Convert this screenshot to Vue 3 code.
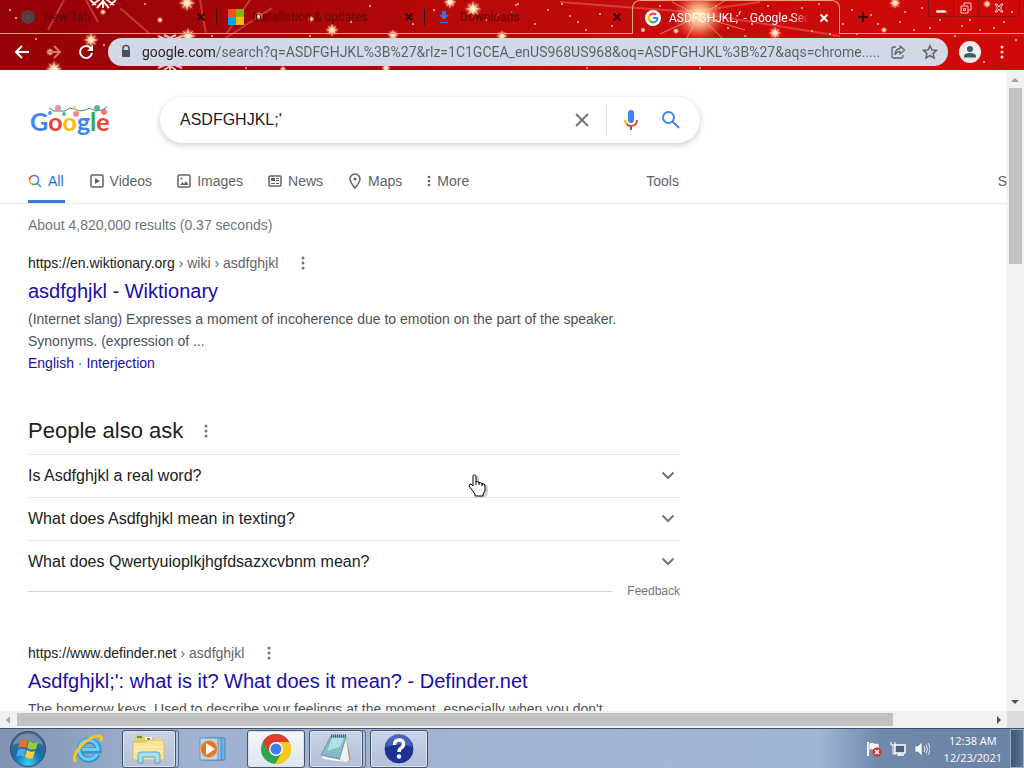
<template>
  <div class="desktop">
    <header class="chrome">
      <svg class="theme" aria-hidden="true">
        <defs>
          <radialGradient id="glow">
            <stop offset="0" stop-color="#fffbe6" />
            <stop offset="0.35" stop-color="#ffd9a0" stop-opacity="0.85" />
            <stop offset="1" stop-color="#ff6a4a" stop-opacity="0" />
          </radialGradient>
        </defs>
        <g stroke="#ff9a8a" stroke-width="2" opacity="0.35">
          <path d="M64 0 48 30M86 0 98 22M120 8 150 34M200 0 206 34M250 0 226 34M272 8 215 45" />
          <path d="M690 12 840 36M690 12 560 2M690 12 760 2" />
        </g>
        <g stroke="#fff4ea" stroke-width="2" fill="none">
          <path d="M92 5 103 -3 114 5M97 8 103 1 109 8M103 0v8M90 0l6 5M116 0l-6 5" />
          <path d="M158 36l12 5 12-5M164 35l6 3 6-3M158 68l12-5 12 5M170 63v7M164 70l6-4 6 4" opacity="0.8" />
        </g>
        <circle v-for="(dot, index) in dots" :key="index" :cx="dot[0]" :cy="dot[1]" :r="dot[2]" fill="#ffc0a0" />
        <g v-for="(star, index) in stars" :key="'s' + index" :transform="`translate(${star[0]} ${star[1]}) scale(${star[2]})`">
          <circle r="8" fill="url(#glow)" />
          <path d="M0-9 1-2 6-6 2-1 9 0 2 1 6 6 1 2 0 9-1 2-6 6-2 1-9 0-2-1-6-6-1-2Z" fill="#ffeccb" opacity="0.85" />
        </g>
        <circle cx="699" cy="16" r="26" fill="url(#glow)" />
        <circle cx="699" cy="16" r="13" fill="url(#glow)" />
        <path d="M699 16 660 34M699 16 672 2M699 16 745 30M699 16 726 0M699 16 735 50M699 16 680 50" stroke="#ffc090" opacity="0.6" />
      </svg>

      <div class="tab-strip">
        <div class="tab-lead"></div>
        <div v-for="tab in tabs" :key="tab.title" class="tab" :class="{ active: tab.active }">
          <svg v-if="tab.icon === 'chrome'" width="16" height="16" viewBox="0 0 16 16">
            <circle cx="8" cy="8" r="7" fill="#4d4248" />
            <circle cx="8" cy="8" r="3" fill="#46505a" stroke="#7c2a30" />
            <path d="M8 5h6M5.400 9.500 2.500 4.500M10.600 9.500 7.500 15" stroke="#7c2a30" />
          </svg>
          <svg v-else-if="tab.icon === 'windows'" width="16" height="16" viewBox="0 0 16 16">
            <path d="M0 0h8v8H0z" fill="#f25022" /><path d="M8 0h8v8H8z" fill="#7fba00" />
            <path d="M0 8h8v8H0z" fill="#00a4ef" /><path d="M8 8h8v8H8z" fill="#ffb900" />
          </svg>
          <svg v-else-if="tab.icon === 'download'" width="16" height="16" viewBox="0 0 16 16">
            <path d="M6 2h4v4h3l-5 5-5-5h3zM4 13h8v1H4z" fill="#3f6fd8" />
          </svg>
          <svg v-else width="16" height="16" viewBox="0 0 16 16">
            <circle cx="8" cy="8" r="8" fill="#fff" />
            <g fill="none" stroke-width="2">
              <path d="M4.500 5.500A4.400 4.400 0 0 1 11 4.700" stroke="#ea4335" />
              <path d="M4.500 5.500a4.400 4.400 0 0 0 0 5" stroke="#fbbc05" />
              <path d="M4.500 10.500a4.400 4.400 0 0 0 6.500.8" stroke="#34a853" />
              <path d="M8 8h4.400a4.400 4.400 0 0 1-1.400 3.300" stroke="#4285f4" />
            </g>
          </svg>
          <span class="tab-title">{{ tab.title }}</span>
          <button class="tab-close" aria-label="Close tab">
            <svg width="14" height="14" viewBox="0 0 14 14"><path d="M3.500 3.500l7 7M10.500 3.500l-7 7" stroke="currentColor" stroke-width="2" /></svg>
          </button>
        </div>
        <div class="tab-rest">
          <button class="new-tab" aria-label="New tab">
            <svg width="14" height="14" viewBox="0 0 14 14"><path d="M7 2v10M2 7h10" stroke="#3a0808" stroke-width="2" /></svg>
          </button>
          <div class="window-buttons">
            <button aria-label="Minimize"><svg width="12" height="12" viewBox="0 0 12 12"><path d="M1 8h10v3H1z" fill="#f6e3df" stroke="#7a2020" stroke-width="0.500" /></svg></button>
            <button aria-label="Restore"><svg width="12" height="12" viewBox="0 0 12 12"><path d="M4 3V1h7v7H9M1 4h7v7H1zM3.500 6.500h2v2h-2z" fill="none" stroke="#f6d0c8" /></svg></button>
            <button class="wide" aria-label="Close"><svg width="12" height="12" viewBox="0 0 12 12"><path d="M2 2h2l2 3 2-3h2L7.500 6 10 10H8L6 7l-2 3H2l2.500-4z" fill="#a82020" stroke="#f6d0c8" /></svg></button>
          </div>
        </div>
      </div>

      <div class="toolbar">
        <button class="tool" aria-label="Back">
          <svg width="18" height="18" viewBox="0 0 18 18"><path d="M16 9H3M9 3 3 9l6 6" fill="none" stroke="#fff" stroke-width="2" /></svg>
        </button>
        <button class="tool" aria-label="Forward">
          <svg width="18" height="18" viewBox="0 0 18 18"><path d="M2 9h13M9 3l6 6-6 6" fill="none" stroke="#e07068" stroke-width="2" /></svg>
        </button>
        <button class="tool" aria-label="Reload">
          <svg width="18" height="18" viewBox="0 0 18 18"><path d="M14 5.500A6 6 0 1 0 15 10" fill="none" stroke="#fff" stroke-width="2" /><path d="M16 2v6h-6z" fill="#fff" /></svg>
        </button>
        <div class="omnibox">
          <svg width="12" height="16" viewBox="0 0 12 16"><path d="M3 7V4.500a3 3 0 0 1 6 0V7" fill="none" stroke="#4a5058" stroke-width="1.500" /><rect x="2" y="6" width="8" height="7" rx="1" fill="#4a5058" /></svg>
          <input v-model="url" class="url" aria-label="Address" spellcheck="false" />
          <button aria-label="Share">
            <svg width="16" height="16" viewBox="0 0 16 16" fill="none" stroke="#5f6368" stroke-width="1.300"><path d="M6 3H3.500Q2 3 2 4.500v8Q2 14 3.500 14h8q1.500 0 1.500-1.500V11" /><path d="M10 2l4.500 4L10 10V7.700Q6.500 7.700 5 10.500q.5-5.500 5-6z" stroke-linejoin="round" /></svg>
          </button>
          <button aria-label="Bookmark">
            <svg width="16" height="16" viewBox="0 0 16 16"><path d="M8 1.800l1.900 4.100 4.500.5-3.300 3.100.9 4.400L8 11.600l-4 2.300.9-4.400L1.600 6.400l4.500-.5z" fill="none" stroke="#5f6368" stroke-width="1.500" /></svg>
          </button>
        </div>
        <button class="avatar" aria-label="Profile">
          <svg width="22" height="22" viewBox="0 0 22 22"><circle cx="11" cy="11" r="11" fill="#f1e9ea" /><circle cx="11" cy="8" r="3" fill="#3d5a6e" /><path d="M5 16.500v-1q0-3.500 6-3.500t6 3.500v1z" fill="#3d5a6e" /></svg>
        </button>
        <button class="tool" aria-label="Menu">
          <svg width="4" height="14" viewBox="0 0 4 14" fill="#ffe0d8"><circle cx="2" cy="2" r="1.500" /><circle cx="2" cy="7" r="1.500" /><circle cx="2" cy="12" r="1.500" /></svg>
        </button>
      </div>
    </header>

    <div class="viewport">
      <main class="page">
        <div class="search-row">
          <a href="#" class="logo">
            <span class="b">G</span><span class="r">o</span><span class="y">o</span><span class="b">g</span><span class="g">l</span><span class="r">e</span>
            <svg class="garland" width="60" height="14" viewBox="0 0 60 14">
              <path d="M1 3l5 3h11l5-3 10 3 5-1 5-2 5 3 7-1 5-3" fill="none" stroke="#5a7a8c" />
              <g opacity="0.85">
                <circle cx="10" cy="3" r="3" fill="#e8808a" /><circle cx="2" cy="8" r="2" fill="#4285f4" />
                <circle cx="16" cy="9" r="2" fill="#46a878" /><circle cx="26" cy="3" r="2" fill="#f0cf60" />
                <circle cx="28" cy="9" r="3" fill="#ea7a70" /><circle cx="49" cy="3" r="3" fill="#4aa878" />
                <circle cx="56" cy="7" r="3" fill="#e8606a" />
              </g>
            </svg>
          </a>
          <form class="search-box" @submit.prevent>
            <input v-model="query" aria-label="Search" spellcheck="false" />
            <button type="button" class="clear" aria-label="Clear" @click="query = ''">
              <svg width="16" height="16" viewBox="0 0 16 16"><path d="M2 2l12 12M14 2 2 14" stroke="#70757a" stroke-width="2" /></svg>
            </button>
            <button type="button" class="mic" aria-label="Search by voice">
              <svg width="24" height="24" viewBox="0 0 24 24">
                <rect x="9" y="2" width="6" height="13" rx="3" fill="#4285f4" />
                <path d="M11 18h2v4h-2z" fill="#5f6368" />
                <path d="M6 12a6 6 0 0 0 2 4.500" fill="none" stroke="#fbbc05" stroke-width="2" />
                <path d="M7.500 16a6 6 0 0 0 10.500-4" fill="none" stroke="#d8503a" stroke-width="2" />
              </svg>
            </button>
            <button class="go" aria-label="Search">
              <svg width="24" height="24" viewBox="0 0 24 24"><circle cx="9.500" cy="9.500" r="5.500" fill="none" stroke="#4285f4" stroke-width="2" /><path d="M13.500 13.500 20 20" stroke="#4285f4" stroke-width="2" /></svg>
            </button>
          </form>
        </div>

        <nav class="modes">
          <a href="#" class="mode current">
            <svg width="14" height="14" viewBox="0 0 14 14" fill="none" stroke-width="1.500">
              <path d="M1.500 6A4.500 4.500 0 0 1 6 1.500" stroke="#ea4335" /><path d="M6 1.500a4.500 4.500 0 0 1 3.200 7.700L13 13" stroke="#4285f4" />
              <path d="M1.500 6A4.500 4.500 0 0 0 4 10" stroke="#fbbc05" /><path d="M4 10a4.500 4.500 0 0 0 5.200-.8" stroke="#34a853" />
            </svg>All
          </a>
          <a href="#" class="mode">
            <svg width="14" height="14" viewBox="0 0 14 14"><rect x="1" y="1" width="12" height="12" rx="1" fill="none" stroke="#5f6368" stroke-width="1.500" /><path d="M5 4v6l5-3z" fill="#5f6368" /></svg>Videos
          </a>
          <a href="#" class="mode">
            <svg width="14" height="14" viewBox="0 0 14 14"><rect x="1" y="1" width="12" height="12" rx="1" fill="none" stroke="#5f6368" stroke-width="1.500" /><path d="M3 11l2.500-3 1.500 2 2-3 2.500 4z" fill="#5f6368" /><circle cx="4.500" cy="4.500" r="1" fill="#5f6368" /></svg>Images
          </a>
          <a href="#" class="mode">
            <svg width="14" height="14" viewBox="0 0 14 14"><rect x="1" y="2" width="12" height="10" rx="1" fill="none" stroke="#5f6368" stroke-width="1.500" /><path d="M3 4h4v3H3zM8 4h3v1H8zM8 6h3v1H8zM3 9h4v1H3zM8 9h3v1H8z" fill="#5f6368" /></svg>News
          </a>
          <a href="#" class="mode">
            <svg width="14" height="16" viewBox="0 0 14 16"><path d="M7 15Q2 9 2 6a5 5 0 0 1 10 0q0 3-5 9z" fill="none" stroke="#5f6368" stroke-width="1.500" /><circle cx="7" cy="6" r="1.500" fill="#5f6368" /></svg>Maps
          </a>
          <button class="mode">
            <svg width="4" height="12" viewBox="0 0 4 12" fill="#5f6368"><circle cx="2" cy="2" r="1.300" /><circle cx="2" cy="6" r="1.300" /><circle cx="2" cy="10" r="1.300" /></svg>More
          </button>
          <button class="mode tools">Tools</button>
          <span class="mode settings">S</span>
        </nav>

        <div class="results">
          <p class="stats">About 4,820,000 results (0.37 seconds)</p>

          <article class="result">
            <div class="cite">
              <span><b>https://en.wiktionary.org</b> › wiki › asdfghjkl</span>
              <button aria-label="About this result"><svg width="4" height="14" viewBox="0 0 4 14" fill="#70757a"><circle cx="2" cy="2" r="1.500" /><circle cx="2" cy="7" r="1.500" /><circle cx="2" cy="12" r="1.500" /></svg></button>
            </div>
            <h3><a href="#">asdfghjkl - Wiktionary</a></h3>
            <p>(Internet slang) Expresses a moment of incoherence due to emotion on the part of the speaker. Synonyms. (expression of ...</p>
            <p class="links"><a href="#">English</a> · <a href="#">Interjection</a></p>
          </article>

          <section class="also-ask">
            <div class="also-head">
              <h2>People also ask</h2>
              <button aria-label="About these questions"><svg width="4" height="14" viewBox="0 0 4 14" fill="#70757a"><circle cx="2" cy="2" r="1.500" /><circle cx="2" cy="7" r="1.500" /><circle cx="2" cy="12" r="1.500" /></svg></button>
            </div>
            <button v-for="question in questions" :key="question" class="question">
              {{ question }}
              <svg width="24" height="24" viewBox="0 0 24 24"><path d="M6.500 8.500l5.500 5.500 5.500-5.500" fill="none" stroke="#70757a" stroke-width="2" /></svg>
            </button>
            <div class="feedback"><a href="#">Feedback</a></div>
          </section>

          <article class="result">
            <div class="cite">
              <span><b>https://www.definder.net</b> › asdfghjkl</span>
              <button aria-label="About this result"><svg width="4" height="14" viewBox="0 0 4 14" fill="#70757a"><circle cx="2" cy="2" r="1.500" /><circle cx="2" cy="7" r="1.500" /><circle cx="2" cy="12" r="1.500" /></svg></button>
            </div>
            <h3><a href="#">Asdfghjkl;': what is it? What does it mean? - Definder.net</a></h3>
            <p>The homerow keys. Used to describe your feelings at the moment, especially when you don't</p>
          </article>
        </div>

        <svg class="pointer" width="22" height="24" viewBox="0 0 22 24">
          <path d="M8 22 5 17 1 12q0-2 2-2l3 2V3q0-2 1.500-2T9 3v6q1-2 3 0 2-1 3 1 3-1 3 2v5l-2 5z" fill="#888" opacity="0.4" transform="translate(2 1)" />
          <path d="M7 22v-2l-3-4-3-4q0-2 2-2l2 2V2q0-1 1.500-1T8 2v6q1-1 3 0v1q2-1 3 1 3-1 3 2v5l-2 3v2z" fill="#fff" stroke="#000" />
          <path d="M8 7v4M11 8v3M14 9v3" stroke="#000" />
        </svg>
      </main>
      <div class="vbar">
        <svg width="16" height="17" viewBox="0 0 16 17"><path d="M4 12l4-4 4 4z" fill="#a3a3a3" /></svg>
        <div class="vtrack"><div class="vthumb"></div></div>
        <svg width="16" height="17" viewBox="0 0 16 17"><path d="M4 6l4 4 4-4z" fill="#505050" /></svg>
      </div>
    </div>

    <div class="hbar">
      <svg width="17" height="16" viewBox="0 0 17 16"><path d="M10 4 6 8l4 4z" fill="#a3a3a3" /></svg>
      <div class="htrack"><div class="hthumb"></div></div>
      <svg width="17" height="16" viewBox="0 0 17 16"><path d="M7 4l4 4-4 4z" fill="#505050" /></svg>
      <div class="corner"></div>
    </div>

    <footer class="taskbar">
      <button class="start" aria-label="Start">
        <svg width="38" height="38" viewBox="0 0 38 38">
          <defs>
            <radialGradient id="orb" cx="0.5" cy="0.9" r="0.9">
              <stop offset="0" stop-color="#35d0f5" /><stop offset="0.45" stop-color="#1a6ca8" /><stop offset="1" stop-color="#536980" />
            </radialGradient>
          </defs>
          <circle cx="19" cy="19" r="17.500" fill="url(#orb)" stroke="#2b4668" />
          <path d="M4 15a15.500 15.500 0 0 1 30 0q-15-7-30 0z" fill="#fff" opacity="0.25" />
          <path d="M11 11q4-3 8 0l-2 7q-4-2-8 0z" fill="#f06a28" />
          <path d="M20 11q4 3 9 1l-2 7q-5 2-9-1z" fill="#9ccb3a" />
          <path d="M9 20q4-3 8 0l-2 7q-4-3-8 0z" fill="#4aa8ec" />
          <path d="M18 20q4 3 8 1l-2 7q-4 2-8-1z" fill="#fbd13a" />
        </svg>
      </button>
      <button class="task" aria-label="Internet Explorer">
        <svg width="32" height="32" viewBox="0 0 32 32">
          <path d="M25.500 21.500A9.500 9.500 0 1 1 26.500 17.500H10" fill="none" stroke="#2c98d8" stroke-width="6" />
          <path d="M25 21A9.500 9.500 0 1 1 26 16.500H10" fill="none" stroke="#6bd0f5" stroke-width="3" />
          <path d="M4 29q-5-5 5-16T28 3q2 1 1 5" fill="none" stroke="#f2c928" stroke-width="3" />
        </svg>
      </button>
      <button class="task framed stacked" aria-label="Explorer">
        <svg width="34" height="32" viewBox="0 0 34 32">
          <path d="M3 4q0-2 2-2h7l2 3h10V5l7 2v17H3z" fill="#e9c965" />
          <path d="M5 3h5v2H5z" fill="#3da65a" /><path d="M13 4h7v3h-7z" fill="#fff" /><path d="M15 5h3v2h-3z" fill="#d84a30" /><path d="M22 6h7v3h-7z" fill="#fff" /><path d="M23 7h4v2h-4z" fill="#3f8ad8" />
          <path d="M1 9h12l2-2h17v20H1z" fill="#f8e49a" stroke="#d9b95a" />
          <path d="M2 14h30M2 18h30" stroke="#fff3c0" />
          <path d="M6 30v-8q0-3 3-3h16q3 0 3 3v8h-5v-6H11v6z" fill="#a8def2" stroke="#58a4c8" />
        </svg>
      </button>
      <button class="task" aria-label="Media Player">
        <svg width="32" height="32" viewBox="0 0 32 32">
          <path d="M12 5h16v22H12z" fill="#6fb2dc" stroke="#4c86b8" /><path d="M8 5h16v22H8z" fill="#90c8ea" stroke="#4c86b8" /><path d="M3 5h18v22H3z" fill="#b4d9f0" stroke="#5d9ac8" />
          <circle cx="12" cy="16" r="8.500" fill="#e87722" stroke="#f5b078" /><path d="M9 10v12l9-6z" fill="#fff" />
        </svg>
      </button>
      <button class="task framed lit" aria-label="Chrome">
        <svg width="32" height="32" viewBox="0 0 32 32">
          <circle cx="16" cy="16" r="15" fill="#31a350" />
          <path d="M16 16 3 8.500A15 15 0 0 1 29.500 9.500L16 9.500z" fill="#e23c2e" />
          <path d="M16 9h13.300A15 15 0 0 1 15 31l7-11.500z" fill="#fbc91c" />
          <path d="M3 8.500 9.800 20 16 16 12 9z" fill="#e23c2e" />
          <circle cx="16" cy="16" r="7" fill="#fff" /><circle cx="16" cy="16" r="5.500" fill="#3d7fe6" />
        </svg>
      </button>
      <button class="task framed stacked" aria-label="Notepad">
        <svg width="32" height="32" viewBox="0 0 32 32">
          <path d="M26 4l5 22-6 4z" fill="#b7a37c" /><path d="M26 5l3 22-4 3z" fill="#f5f2e8" />
          <path d="M11 3h15l-6 23L1 22z" fill="#7fbcc8" stroke="#71959f" /><path d="M12 5h12l-4 9L7 18z" fill="#b4dfe6" /><path d="M1 23l19 4 5 2-21-3z" fill="#fff" />
          <path d="M20 26l6-20 1 20-2 3z" fill="#f2f2ee" />
          <path d="M11 3h15" stroke="#555" stroke-width="3" stroke-dasharray="1 1" />
        </svg>
      </button>
      <button class="task framed" aria-label="Help">
        <svg width="32" height="32" viewBox="0 0 32 32">
          <circle cx="16" cy="16" r="15" fill="#1c3391" stroke="#c6d0ea" /><path d="M3 14a13 13 0 0 1 26 0q-12-5-26 0z" fill="#5872c8" opacity="0.7" />
          <path d="M11.500 12q0-5 4.500-5t4.500 4q0 2.500-2.500 4-2 1.300-2 4" fill="none" stroke="#fff" stroke-width="3.500" /><circle cx="16" cy="23.500" r="2.200" fill="#fff" />
        </svg>
      </button>

      <div class="tray">
        <svg width="16" height="16" viewBox="0 0 16 16"><path d="M2 1v14" stroke="#fff" stroke-width="2" /><path d="M3 2q3-1 5 0t5 0v7q-3 1-5 0T3 9z" fill="#f4f6fa" stroke="#5c6d86" stroke-width="0.500" /><circle cx="11" cy="11" r="4.500" fill="#d8342c" /><path d="M9 9l4 4M13 9l-4 4" stroke="#fff" stroke-width="1.500" /></svg>
        <svg width="16" height="16" viewBox="0 0 16 16"><path d="M5 4h10v8H5z" fill="#4c617c" stroke="#fff" stroke-width="1.500" /><path d="M7 14h7M10 12v2" stroke="#fff" stroke-width="1.500" /><path d="M1 1v3h4V1M3 4v9h3" fill="none" stroke="#fff" /></svg>
        <svg width="16" height="16" viewBox="0 0 16 16"><path d="M1 5h3l4-4v14l-4-4H1z" fill="#f4f6fa" stroke="#5c6d86" stroke-width="0.500" /><path d="M10 5q2 3 0 6M12 3.500q3 4.500 0 9M14 2q4 6 0 12" fill="none" stroke="#e6ecf4" /></svg>
        <div class="clock"><span>12:38 AM</span><span>12/23/2021</span></div>
      </div>
      <button class="show-desktop" aria-label="Show desktop"></button>
    </footer>
  </div>
</template>

<script setup>
import { ref } from 'vue'

const url = ref('google.com/search?q=ASDFGHJKL%3B%27&rlz=1C1GCEA_enUS968US968&oq=ASDFGHJKL%3B%27&aqs=chrome.....')
const query = ref("ASDFGHJKL;'")

const tabs = [
  { title: 'New Tab', icon: 'chrome' },
  { title: 'Installation & updates', icon: 'windows' },
  { title: 'Downloads', icon: 'download' },
  { title: "ASDFGHJKL;' - Google Search", icon: 'google', active: true }
]

const questions = [
  'Is Asdfghjkl a real word?',
  'What does Asdfghjkl mean in texting?',
  'What does Qwertyuioplkjhgfdsazxcvbnm mean?'
]

// x, y, scale
const stars = [
  [187, 3, 1], [160, 20, 0.4], [103, 12, 0.4], [91, 40, 0.9], [50, 52, 0.5], [54, 69, 1],
  [259, 16, 0.5], [450, 2, 0.8], [473, 9, 1], [502, 36, 0.7], [393, 35, 0.7], [386, 68, 0.6],
  [775, 33, 0.8], [895, 3, 0.7], [884, 30, 0.4], [987, 4, 0.5], [676, 31, 0.4], [283, 69, 0.4],
  [311, 19, 0.4], [332, 30, 0.8], [188, 36, 1]
]

// x, y, radius
const dots = [
  [10, 10, 1], [16, 18, 1], [36, 39, 1], [145, 4, 1], [104, 45, 1], [212, 36, 1], [518, 4, 1], [512, 12, 1],
  [535, 24, 1], [562, 4, 1], [570, 16, 1], [586, 30, 1], [600, 14, 1], [643, 30, 2], [660, 6, 1], [740, 12, 1],
  [752, 24, 1], [768, 6, 1], [790, 20, 1], [812, 31, 1], [830, 34, 1], [852, 10, 1], [857, 34, 1], [871, 15, 1],
  [900, 22, 1], [914, 30, 1], [940, 20, 1], [946, 12, 1], [962, 26, 1], [980, 30, 1], [1004, 22, 1], [1016, 40, 1],
  [984, 62, 1], [955, 36, 1], [700, 68, 1], [745, 36, 1], [587, 68, 1], [246, 68, 1], [310, 36, 1],
  [434, 10, 1], [486, 20, 1], [498, 15, 1], [516, 5, 1], [548, 10, 1], [578, 22, 1], [612, 26, 1], [370, 6, 1],
  [413, 24, 1], [351, 22, 1], [716, 6, 1], [728, 28, 1], [762, 14, 1], [802, 8, 1], [819, 4, 1], [843, 24, 1],
  [878, 24, 1], [905, 12, 1], [922, 8, 1], [930, 28, 1], [970, 20, 1], [994, 28, 1], [1012, 12, 1]
]
</script>

<style>
body {
  margin: 0;
  overflow: hidden;
}
</style>

<style scoped>
* {
  box-sizing: border-box;
}

.desktop {
  height: 100vh;
  display: flex;
  flex-direction: column;
  font-family: 'Liberation Sans', Arial, sans-serif;
  background: white;
}

button {
  border: none;
  background: none;
  padding: 0;
  font: inherit;
  color: inherit;
  display: flex;
  align-items: center;
  justify-content: center;
}

a {
  text-decoration: none;
  color: inherit;
}

svg {
  flex: none;
  display: block;
}

p, h2, h3 {
  margin: 0;
  font-weight: normal;
}

/* browser frame */
.chrome {
  position: relative;
  flex: none;
  font-family: Roboto, 'Noto Sans', sans-serif;
  background: linear-gradient(90deg, #960208, #a50508 25%, #b80808 45%, #c60c0c 65%, #d20808);
}

.theme {
  position: absolute;
  width: 100%;
  height: 100%;
}

.tab-strip {
  position: relative;
  display: flex;
  height: 34px;
}

.tab-lead {
  width: 8px;
  border-bottom: 1px solid #f0a080;
}

.tab {
  display: flex;
  align-items: center;
  gap: 8px;
  flex: 0 1 208px;
  min-width: 0;
  padding: 0 8px 0 12px;
  font-size: 12px;
  color: #5c0a0a;
  border-bottom: 1px solid #f0a080;
}

/* divider between idle tabs */
.tab:nth-child(2)::after,
.tab:nth-child(3)::after {
  content: '';
  width: 1px;
  height: 16px;
  margin-right: -9px;
  background: #4a0808;
}

.tab-title {
  flex: 1;
  overflow: hidden;
  white-space: nowrap;
  mask-image: linear-gradient(90deg, black 88%, transparent);
}

.tab-close {
  color: #3a0808;
}

.tab.active {
  color: white;
  border: 1px solid #f0a080;
  border-bottom: none;
  border-radius: 8px 8px 0 0;
}

.tab.active .tab-close {
  color: white;
}

.tab-rest {
  flex: 1;
  display: flex;
  align-items: center;
  justify-content: space-between;
  padding: 0 4px 0 16px;
  border-bottom: 1px solid #f0a080;
}

.window-buttons {
  display: flex;
  align-self: flex-start;
  height: 17px;
  border: 1px solid #8c1414;
  border-top: none;
  border-radius: 0 0 4px 4px;
}

.window-buttons button {
  width: 25px;
  border-right: 1px solid #8c1414;
}

.window-buttons .wide {
  width: 40px;
  border-right: none;
}

.toolbar {
  position: relative;
  display: flex;
  align-items: center;
  height: 36px;
  padding: 0 6px;
}

.tool {
  width: 32px;
  height: 32px;
}

.omnibox {
  flex: 1;
  display: flex;
  align-items: center;
  gap: 16px;
  height: 28px;
  margin: 0 11px 0 6px;
  padding: 0 10px 0 12px;
  border-radius: 14px;
  background: #d3d8e6;
}

.url {
  flex: 1;
  min-width: 0;
  margin: 0 -10px 0 -6px;
  padding: 0;
  border: none;
  outline: none;
  font-family: inherit;
  font-size: 14px;
  color: transparent;
  background: linear-gradient(90deg, #202124 74px, #5a606a 74px);
  background-clip: text;
}

.avatar {
  margin-right: 5px;
}

/* web page */
.viewport {
  flex: 1;
  min-height: 0;
  display: flex;
}

.page {
  position: relative;
  flex: 1;
  min-width: 0;
  overflow: hidden;
  color: #4d5156;
  font-size: 14px;
  line-height: 22px;
}

.search-row {
  display: flex;
  align-items: center;
  padding: 27px 28px 0;
}

.logo {
  position: relative;
  display: flex;
  width: 132px;
  padding: 2px 0 0 2px;
  font-family: Lato, sans-serif;
  font-size: 25px;
  font-weight: bold;
  line-height: 32px;
}

.b { color: #4285f4; }
.r { color: #ea4335; }
.y { color: #fbbc05; }
.g { color: #34a853; }

.garland {
  position: absolute;
  left: 20px;
  top: 2px;
}

.search-box {
  display: flex;
  align-items: center;
  flex: 0 1 540px;
  height: 46px;
  padding: 0 17px 0 20px;
  border-radius: 24px;
  box-shadow: 0 2px 5px 1px rgba(64, 60, 67, 0.2);
}

.search-box input {
  flex: 1;
  min-width: 0;
  padding: 0;
  border: none;
  outline: none;
  font-family: inherit;
  font-size: 16px;
  color: #202124;
  background: none;
}

.clear {
  width: 33px;
  height: 32px;
  padding-right: 16px;
  border-right: 1px solid #dadce0;
}

.mic {
  margin: 0 16px 0 12px;
}

.modes {
  display: flex;
  gap: 25px;
  margin-top: 16px;
  padding-left: 28px;
  border-bottom: 1px solid #ebebeb;
  color: #5f6368;
}

.mode {
  flex: none;
  display: flex;
  align-items: center;
  gap: 6px;
  height: 44px;
  padding-top: 2px;
  border-bottom: 3px solid transparent;
}

.current {
  padding-right: 1px;
  color: #1a73e8;
  border-color: #3b78d8;
}

.tools {
  margin-left: 152px;
}

.settings {
  margin-left: auto;
}

.results {
  max-width: 680px;
  padding: 10px 0 0 28px;
}

.stats {
  margin-bottom: 16px;
  color: #70757a;
}

.result p {
  max-width: 600px;
}

.cite {
  display: flex;
  align-items: center;
  gap: 23px;
  color: #5f6368;
}

.cite b {
  font-weight: normal;
  color: #202124;
}

h3 {
  padding: 4px 0;
  font-size: 20px;
  line-height: 26px;
  color: #1a0dab;
}

.links a {
  color: #1a0dab;
}

.also-ask {
  margin: 43px 0;
}

.also-head {
  display: flex;
  align-items: center;
  gap: 21px;
  margin-bottom: 9px;
}

h2 {
  font-size: 22px;
  line-height: 28px;
  color: #202124;
}

.question {
  width: 100%;
  height: 43px;
  justify-content: space-between;
  border-top: 1px solid #e4e6e8;
  font-size: 16px;
  color: #202124;
}

.feedback {
  display: flex;
  align-items: center;
  gap: 15px;
  font-size: 12px;
  line-height: 16px;
  color: #70757a;
}

.feedback::before {
  content: '';
  flex: 1;
  border-top: 1px solid #d4d6d9;
}

.pointer {
  position: absolute;
  left: 468px;
  top: 404px;
}

/* scroll bars */
.vbar {
  flex: none;
  display: flex;
  flex-direction: column;
  width: 17px;
  background: #f1f1f1;
}

.vtrack {
  flex: 1;
}

.vthumb {
  height: 29%;
  margin: 1px 2px 0;
  background: #c1c1c1;
}

.hbar {
  flex: none;
  display: flex;
  align-items: center;
  height: 17px;
  background: #f1f1f1;
}

.htrack {
  flex: 1;
}

.hthumb {
  width: 90%;
  height: 13px;
  background: #c1c1c1;
}

.corner {
  width: 17px;
  align-self: stretch;
  background: #dcdcdc;
}

/* taskbar */
.taskbar {
  flex: none;
  display: flex;
  align-items: center;
  height: 40px;
  border-top: 1px solid #3f5068;
  background: linear-gradient(90deg, #8093b4, #9fb0d0 15%, #a3b4d3 50%, #9fb6d6 80%, #6f89ab 86%, #6b83a5);
}

.start {
  width: 56px;
}

.task {
  width: 64px;
  height: 38px;
}

.framed {
  width: 58px;
  margin: 0 2px;
  border: 1px solid #42536c;
  border-radius: 3px;
  background: linear-gradient(#c9d3e6, #b2c0da);
  box-shadow: inset 0 0 0 1px #dbe3f0;
}

.stacked {
  width: 54px;
  margin-right: 5px;
  box-shadow: inset 0 0 0 1px #dbe3f0, 3px 0 0 -1px #b2c0da, 3px 0 0 #5b6c86;
}

.lit {
  background: linear-gradient(#f4f6fa, #dfe5ef);
}

.tray {
  display: flex;
  align-items: center;
  gap: 8px;
  margin-left: auto;
  color: white;
}

.clock {
  display: flex;
  flex-direction: column;
  align-items: center;
  margin: 0 8px 0 6px;
  font-family: 'Open Sans', 'Noto Sans', sans-serif;
  font-size: 11px;
  line-height: 17px;
}

.show-desktop {
  width: 14px;
  height: 39px;
  border: 1px solid #9db2cc;
  background: linear-gradient(90deg, #3f566f, #5a7592);
}
</style>
